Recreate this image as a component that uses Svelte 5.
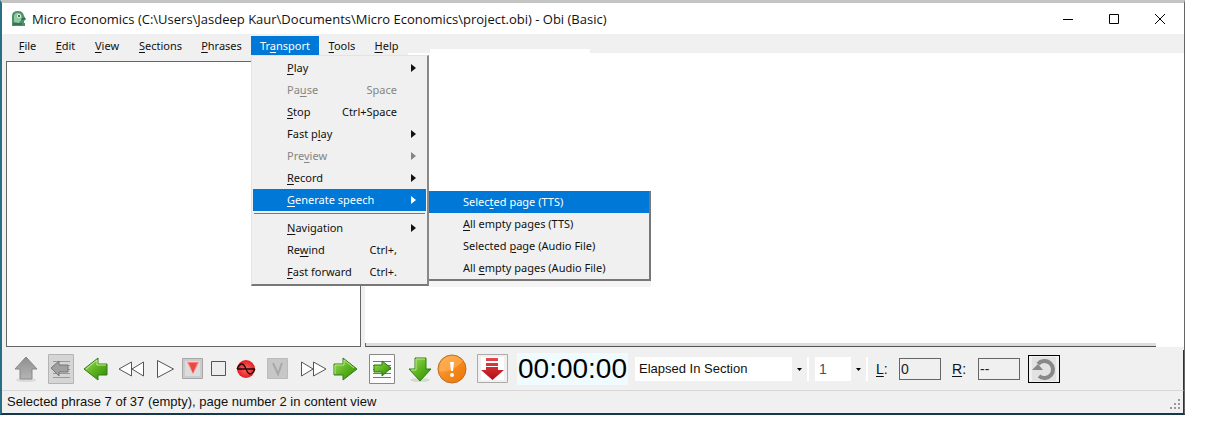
<script>
  const menus = [
    ['', 'F', 'ile'], ['', 'E', 'dit'], ['', 'V', 'iew'], ['', 'S', 'ections'],
    ['', 'P', 'hrases'], ['Tr', 'a', 'nsport'], ['', 'T', 'ools'], ['', 'H', 'elp']
  ];
  const items = [
    { t: ['', 'P', 'lay'], sub: true },
    { t: ['Pa', 'u', 'se'], key: 'Space', off: true },
    { t: ['', 'S', 'top'], key: 'Ctrl+Space' },
    { t: ['Fast p', 'l', 'ay'], sub: true },
    { t: ['Pre', 'v', 'iew'], sub: true, off: true },
    { t: ['', 'R', 'ecord'], sub: true },
    { t: ['', 'G', 'enerate speech'], sub: true, open: true },
    { sep: true },
    { t: ['', 'N', 'avigation'], sub: true },
    { t: ['Re', 'w', 'ind'], key: 'Ctrl+,' },
    { t: ['', 'F', 'ast forward'], key: 'Ctrl+.' }
  ];
  const speech = [
    ['Selec', 't', 'ed page (TTS)'], ['', 'A', 'll empty pages (TTS)'],
    ['Selected ', 'p', 'age (Audio File)'], ['All ', 'e', 'mpty pages (Audio File)']
  ];
</script>

{#snippet label(t)}<span>{t[0]}<u>{t[1]}</u>{t[2]}</span>{/snippet}

<div class="window">
  <header class="title">
    <svg class="logo" width="16" height="16" viewBox="0 0 16 16">
      <path d="M1 15V5Q1 0 7 0q5 0 6 5l2 3-2 2v2h1v3z" fill="#4c8f68" />
      <path d="M3 11V5q1-4 5-3 3 1 3 6L8 12z" fill="#8fca9d" />
      <circle cx="8" cy="5" r="2" fill="#e9f7e8" /><circle cx="8" cy="5" r="1" fill="#173f34" />
      <path d="M2 13h9M10 8h4" stroke="#225746" />
    </svg>
    <h1>Micro Economics (C:\Users\Jasdeep Kaur\Documents\Micro Economics\project.obi) - Obi (Basic)</h1>
    <div class="controls">
      <button aria-label="Minimize"><svg width="12" height="12"><path d="M1 6.5h10" /></svg></button>
      <button aria-label="Maximize"><svg width="12" height="12"><path d="M1.500 1.500h9v9h-9z" /></svg></button>
      <button aria-label="Close"><svg width="12" height="12"><path d="M1 1l10 10M11 1L1 11" /></svg></button>
    </div>
  </header>

  <nav class="menubar">
    {#each menus as m, i}
      <div class="slot">
        <button class:active={i === 5}>{@render label(m)}</button>
        {#if i === 5}
          <div class="menu">
            {#each items as it}
              {#if it.sep}
                <hr />
              {:else}
                <button class="item" class:hot={it.open} disabled={it.off}>
                  {@render label(it.t)}
                  {#if it.key}<span class="key">{it.key}</span>{/if}
                  {#if it.sub}<svg class="tri" width="5" height="8"><path d="M0 0l5 4-5 4z" fill="currentColor" /></svg>{/if}
                </button>
              {/if}
            {/each}
            <div class="submenu">
              {#each speech as s, j}
                <button class="item" class:hot={j === 0}>{@render label(s)}</button>
              {/each}
            </div>
          </div>
        {/if}
      </div>
    {/each}
    <div class="tab"></div>
  </nav>

  <main>
    <section class="tree"></section>
    <section class="content"><div class="edge"></div></section>
  </main>

  <svg class="defs" width="0" height="0" aria-hidden="true">
    <defs>
      <linearGradient id="green" x2="1" y2="1"><stop stop-color="#a6df63" /><stop offset=".5" stop-color="#5db51f" /><stop offset="1" stop-color="#2f8608" /></linearGradient>
      <linearGradient id="gray" x2="0" y2="1"><stop stop-color="#8e8e8e" /><stop offset="1" stop-color="#b5b5b5" /></linearGradient>
      <linearGradient id="orange" x2="1" y2="1"><stop stop-color="#ffae4d" /><stop offset=".5" stop-color="#f68a1e" /><stop offset="1" stop-color="#ee7404" /></linearGradient>
      <linearGradient id="red" x2="0" y2="1"><stop stop-color="#e7474a" /><stop offset="1" stop-color="#b30d16" /></linearGradient>
      <radialGradient id="ball"><stop stop-color="#ff6a60" /><stop offset="1" stop-color="#e31e25" /></radialGradient>
    </defs>
  </svg>

  <div class="toolbar">
    <div class="icons">
      <button aria-label="Previous section"><svg width="26" height="28" viewBox="0 0 26 28"><ellipse cx="13" cy="25" rx="10" ry="2" fill="#dadada" /><path d="M13 2L24 14h-5v10H7V14H2z" fill="url(#gray)" stroke="#888" /></svg></button>
      <button aria-label="Previous page"><svg width="26" height="30" viewBox="0 0 26 30"><path d="M.5.5h25v29H.5z" fill="#d5d5d5" stroke="#b4b4b4" /><path d="M5 7.500h17M5 11.500h17M5 15.500h17M5 19.500h17M5 23.500h17" stroke="#999" /><path d="M3 14l8-7v4h9v7h-9v4z" fill="#a0a0a0" stroke="#777" /></svg></button>
      <button aria-label="Previous phrase"><svg width="26" height="26" viewBox="0 0 26 26"><path d="M1 13L15 2v6h9v11h-9v5z" fill="url(#green)" stroke="#347d17" /><path d="M3 13L14 4v5h9" fill="none" stroke="#c8ee98" /></svg></button>
      <button aria-label="Rewind"><svg width="27" height="18" viewBox="0 0 27 18"><path d="M13.500 2v14L1 9zM25.500 2v14L14 9z" fill="#fff" stroke="#555" /></svg></button>
      <button aria-label="Play"><svg width="19" height="20" viewBox="0 0 19 20"><path d="M1.500 1.500v17L17.500 10z" fill="#fafafa" stroke="#555" /></svg></button>
      <button aria-label="Recording options"><svg width="22" height="22" viewBox="0 0 22 22"><path d="M.5.5h20v20H.5z" fill="#c9cccc" stroke="#a5a5a5" /><path d="M3 3h15v15H3z" fill="#dcdcdc" /><path d="M5 4h12L11 16z" fill="#ff7d77" /><path d="M7 5l4 10 4-10" fill="#ea4a47" /></svg></button>
      <button aria-label="Stop"><svg width="16" height="16" viewBox="0 0 16 16"><path d="M.5.5h14v14H.5z" fill="#ededed" stroke="#555" /></svg></button>
      <button aria-label="Record"><svg width="20" height="20" viewBox="0 0 20 20"><circle cx="10" cy="10" r="9" fill="url(#ball)" /><path d="M1 10h18M1 10Q6 0 10 10t9 0" fill="none" stroke="#260707" stroke-width="1.300" /></svg></button>
      <button aria-label="Preview options"><svg width="22" height="22" viewBox="0 0 22 22"><path d="M.5.5h20v20H.5z" fill="#c7c7c7" stroke="#bbb" /><path d="M6 5l5 11 4-11" fill="none" stroke="#a8a8a8" stroke-width="2" /></svg></button>
      <button aria-label="Fast forward"><svg width="27" height="18" viewBox="0 0 27 18"><path d="M1.500 2v14L13 9zM13.500 2v14L26 9z" fill="#fff" stroke="#555" /></svg></button>
      <button aria-label="Next phrase"><svg width="26" height="26" viewBox="0 0 26 26"><path d="M25 13L11 2v6H2v11h9v5z" fill="url(#green)" stroke="#347d17" /><path d="M3 18V9h9V4l10 8" fill="none" stroke="#b8e689" /></svg></button>
      <button aria-label="Next page"><svg width="26" height="30" viewBox="0 0 26 30"><path d="M.5.5h25v29H.5z" fill="#fcfcfc" stroke="#888" /><path d="M4 7.500h18M4 11.500h18M4 15.500h18M4 19.500h18M4 23.500h18" stroke="#777" /><path d="M22 14l-9-7v4H5v7h8v4z" fill="url(#green)" stroke="#28780f" /></svg></button>
      <button aria-label="Next section"><svg width="26" height="28" viewBox="0 0 26 28"><ellipse cx="13" cy="25" rx="10" ry="2" fill="#d3dccd" /><path d="M13 26L24 14h-5V3H8v11H2z" fill="url(#green)" stroke="#347d17" /><path d="M4 15h5V4h9" fill="none" stroke="#b8e689" /></svg></button>
      <button aria-label="To-do mark"><svg width="30" height="30" viewBox="0 0 30 30"><circle cx="15" cy="15" r="14" fill="url(#orange)" stroke="#b86d2a" /><path d="M2 17q12 3 24-10Q20 1 13 2 3 4 2 17" fill="#ffb45c" opacity=".6" /><path d="M13 8h4l-1 9h-2z" fill="#fff" /><circle cx="15" cy="21" r="2" fill="#fff" /></svg></button>
      <button aria-label="Insert phrase"><svg width="31" height="30" viewBox="0 0 31 30"><path d="M.5.5h30v28H.5z" fill="#f0f0f0" stroke="#aaa" /><path d="M4 3h23v23H4z" fill="#fff" /><path d="M9 4h12v3H9zM9 9h12v3H9zM9 13h12v3h6L15.500 26 4 16h5z" fill="url(#red)" /></svg></button>
    </div>
    <output class="time" aria-label="Time">00:00:00</output>
    <label class="combo wide"><select aria-label="Time display"><option>Elapsed In Section</option></select><i><svg width="5" height="3"><path d="M0 0h5L2.500 3z" /></svg></i></label>
    <label class="combo rate"><select aria-label="Playback rate"><option>1</option></select><i><svg width="5" height="3"><path d="M0 0h5L2.500 3z" /></svg></i></label>
    <label class="level" for="left"><u>L</u>:</label><input id="left" value="0" readonly />
    <label class="level right" for="right"><u>R</u>:</label><input id="right" value="--" readonly />
    <button class="reset" aria-label="Reset"><svg width="24" height="24" viewBox="0 0 24 24"><path d="M0 0h24v24H0z" fill="#e2e2e2" /><path d="M6 7a8.500 8.500 0 1 1 1 12" fill="none" stroke="#888" stroke-width="4" /><path d="M0 13l6-6 5 6z" fill="#888" /></svg></button>
  </div>

  <footer>
    <span>Selected phrase 7 of 37 (empty), page number 2 in content view</span>
    <svg width="11" height="11" viewBox="0 0 11 11"><path d="M8 0h2v2H8zM4 4h2v2H4zM8 4h2v2H8zM0 8h2v2H0zM4 8h2v2H4zM8 8h2v2H8z" fill="#999" /></svg>
  </footer>
</div>

<style>
  :global(body) { margin: 0; background: #fff; }
  * { box-sizing: border-box; }
  button { font: inherit; color: inherit; border: 0; background: none; padding: 0; margin: 0; }
  button svg { display: block; }
  u { text-underline-offset: 2px; text-decoration-thickness: 1px; }
  .window {
    display: flex; flex-direction: column; height: calc(100vh - 9px); min-height: 400px;
    margin-right: 31px; border: 2px solid #17384b; border-top: 3px solid #c4c4c4;
    border-left-color: #286f83; border-right: 1px solid #666; background: #f0f0f0;
    font: 12px/16px "Noto Sans", "Open Sans", sans-serif; color: #111;
  }
  .title { display: flex; align-items: center; flex: 0 0 31px; padding: 1px 0 0 9px; background: #fff; }
  h1 { flex: 1; margin: 0 0 0 5px; font-family: "Open Sans", "Noto Sans", sans-serif; font-size: 13px; font-weight: 400; white-space: nowrap; }
  .controls { display: flex; gap: 34px; padding-right: 18px; }
  .controls path { fill: none; stroke: #000; stroke-width: 1; }
  .menubar {
    display: grid; grid-template-columns: 37px 39px 44px 63px 59px 68px 46px 43px 22px 160px; grid-template-rows: 19px;
    flex: 0 0 19px; min-height: 0; padding: 2px 0 0 7px; position: relative; z-index: 2; font-size: 11px;
  }
  .tab { grid-column: 10; align-self: end; height: 6px; background: #fff; }
  .slot { position: relative; display: grid; background: #f0f0f0; }
  .slot > button { text-align: center; white-space: nowrap; }
  .slot > .active, .hot { background: #0078d7; color: #fff; }
  .menu {
    position: absolute; z-index: 1; top: 19px; left: 0; width: 178px; padding: 1px 1px 1px;
    border: 1px solid #e3e3e3; border-right: 2px solid #888; border-bottom: 2px solid #777; background: #f0f0f0;
  }
  .item { display: flex; align-items: center; width: 100%; height: 22px; padding: 0 10px 0 34px; white-space: nowrap; }
  .item:disabled { color: #858585; }
  .key { margin-left: auto; margin-right: 19px; }
  .tri { margin-left: auto; }
  hr { height: 1px; margin: 2px 1px 3px; border: 0; background: #777; }
  .submenu {
    position: absolute; left: 177px; top: 135px; width: 222px;
    border-right: 2px solid #777; border-bottom: 2px solid #777; background: #f0f0f0; box-shadow: 0 6px #f4f4f4;
  }
  main { display: flex; flex: 1; gap: 4px; min-height: 0; }
  .tree { flex: 0 0 355px; margin: 8px 0 3px 4px; border: 1px solid #666; background: #fff; }
  .content { display: flex; align-items: flex-end; flex: 1; background: #fff; margin-bottom: 3px; }
  .edge { flex: 1; height: 4px; margin-right: 28px; border-left: 1px solid #666; border-bottom: 1px solid #555; background: #ddd; }
  .defs { position: absolute; }
  .toolbar { display: flex; align-items: center; flex: 0 0 41px; padding: 0 0 2px 6px; border-bottom: 1px solid #d7d7d7; font: 14px/16px "Liberation Sans", Arial, sans-serif; }
  .icons { display: grid; align-items: center; grid-template-columns: 35px 36px 34px 36px 32px 24px 28px 26px 38px 32px 32px 42px 34px 30px 50px; }
  .icons button { display: grid; place-items: center; height: 32px; }
  .time { padding: 0 1px; background: #f0fbff; color: #000; font-size: 28px; line-height: 32px; }
  .combo { display: flex; height: 24px; margin-left: 7px; padding-right: 2px; background: #fff; font-size: 13px; }
  .wide { width: 174px; }
  .rate { width: 53px; margin-left: 6px; font-size: 14px; }
  select { flex: 1; min-width: 0; padding: 0 0 0 4px; border: 0; appearance: none; background: none; font: inherit; color: #111; }
  .rate select { color: #44505e; }
  .combo i { display: grid; place-items: center; width: 15px; background: #f0f0f0; }
  .level { width: 23px; margin-left: 8px; }
  .right { width: 26px; margin-left: 11px; }
  input { width: 42px; height: 22px; padding: 0 1px; border: 1px solid #666; background: #f0f0f0; font: inherit; color: #222; }
  .reset { display: grid; place-items: center; width: 32px; height: 28px; margin-left: 8px; border: 1px solid #000; }
  footer { display: flex; align-items: center; justify-content: space-between; flex: 0 0 22px; padding: 0 2px 0 5px; font: 13px/16px "Liberation Sans", Arial, sans-serif; }
  .toolbar, footer { border-right: 1px solid #17384b; }
  footer svg { align-self: flex-end; margin-bottom: 3px; }
</style>
